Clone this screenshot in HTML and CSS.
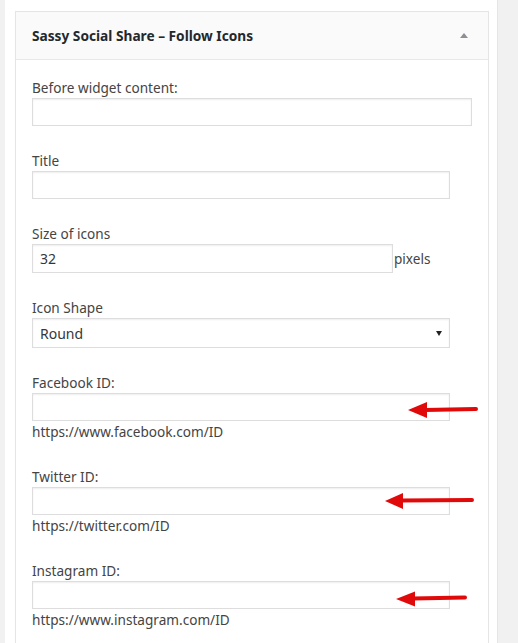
FILE: index.html
```html
<!DOCTYPE html>
<html>
<head>
<meta charset="utf-8">
<link rel="stylesheet" href="styles.css">
</head>
<body>
<div class="page">
  <div class="widget">
    <div class="widget-top">
      <h3 class="widget-title">Sassy Social Share – Follow Icons</h3>
      <span class="toggle"></span>
    </div>
    <div class="widget-inside">
      <div class="field">
        <label class="lbl">Before widget content:</label>
        <input class="txt wide" type="text">
      </div>
      <div class="field">
        <label class="lbl">Title</label>
        <input class="txt" type="text">
      </div>
      <div class="field">
        <label class="lbl">Size of icons</label>
        <div class="size-row">
          <input class="txt size" type="text" value="32">
          <span class="unit">pixels</span>
        </div>
      </div>
      <div class="field">
        <label class="lbl">Icon Shape</label>
        <div class="select-wrap">
          <select class="sel"><option>Round</option></select>
        </div>
      </div>
      <div class="field">
        <label class="lbl">Facebook ID:</label>
        <div class="with-arrow">
          <input class="txt" type="text">
          <svg class="arrow" width="460" height="28" viewBox="0 0 460 28">
            <polygon points="376,17 395,9 395,25" />
            <line x1="393" y1="17" x2="444" y2="16" />
          </svg>
        </div>
        <div class="help">https://www.facebook.com/ID</div>
      </div>
      <div class="field">
        <label class="lbl">Twitter ID:</label>
        <div class="with-arrow">
          <input class="txt" type="text">
          <svg class="arrow" width="460" height="28" viewBox="0 0 460 28">
            <polygon points="353,14 371,6 371,22" />
            <line x1="369" y1="13.5" x2="440" y2="13" />
          </svg>
        </div>
        <div class="help">https://twitter.com/ID</div>
      </div>
      <div class="field">
        <label class="lbl">Instagram ID:</label>
        <div class="with-arrow">
          <input class="txt" type="text">
          <svg class="arrow" width="460" height="28" viewBox="0 0 460 28">
            <polygon points="364,18 383,10.5 383,25.5" />
            <line x1="381" y1="17.5" x2="433" y2="16.5" />
          </svg>
        </div>
        <div class="help">https://www.instagram.com/ID</div>
      </div>
    </div>
  </div>
</div>
</body>
</html>
```
FILE: styles.css
```css
html, body {
  margin: 0;
  padding: 0;
}
body {
  background: #f1f1f1;
  font-family: "Noto Sans", "Open Sans", sans-serif;
  color: #444;
  font-size: 13.6px;
}
.page {
  margin-left: 5px;
  width: 493px;
  min-height: 643px;
  background: #fff;
  border-right: 1px solid #e5e5e5;
  padding-top: 11px;
  box-sizing: border-box;
}
.widget {
  margin-left: 10px;
  width: 474px;
  box-sizing: border-box;
  border: 1px solid #e5e5e5;
  box-shadow: 0 1px 1px rgba(0,0,0,.04);
  background: #fff;
}
.widget-top {
  height: 48px;
  box-sizing: border-box;
  background: #fafafa;
  border-bottom: 1px solid #e8e8e8;
  display: flex;
  align-items: center;
  justify-content: space-between;
  padding: 0 20px 0 16px;
}
.widget-title {
  margin: 0;
  font-size: 13.7px;
  font-weight: 700;
  color: #23282d;
  line-height: 47px;
}
.toggle {
  width: 0;
  height: 0;
  border-left: 4px solid transparent;
  border-right: 4px solid transparent;
  border-bottom: 5px solid #8c8f94;
  margin-top: -1px;
}
.widget-inside {
  padding: 18px 16px 0 16px;
}
.field {
  margin-bottom: 25px;
}
.lbl {
  display: block;
  line-height: 20px;
  height: 20px;
  color: #444;
}
.txt {
  display: block;
  box-sizing: border-box;
  width: 418px;
  height: 28px;
  margin: 0;
  border: 1px solid #ddd;
  box-shadow: inset 0 1px 2px rgba(0,0,0,.07);
  background: #fff;
  padding: 0 7px;
  font-family: "Noto Sans", "Open Sans", sans-serif;
  font-size: 14px;
  color: #32373c;
  outline: none;
}
.txt.wide {
  width: 440px;
}
.size-row {
  display: flex;
  align-items: center;
}
.txt.size {
  width: 361px;
  height: 29px;
}
.unit {
  margin-left: 1px;
  color: #444;
}
.select-wrap {
  position: relative;
  width: 418px;
}
.select-wrap::after {
  content: "";
  position: absolute;
  right: 8px;
  top: 13px;
  border-left: 3px solid transparent;
  border-right: 3px solid transparent;
  border-top: 5px solid #222;
  pointer-events: none;
}
.sel {
  display: block;
  -webkit-appearance: none;
  appearance: none;
  box-sizing: border-box;
  width: 418px;
  height: 30px;
  margin: 0;
  border: 1px solid #ddd;
  border-radius: 0;
  box-shadow: inset 0 1px 2px rgba(0,0,0,.07);
  background: #fff;
  padding: 0 7px;
  font-family: "Noto Sans", "Open Sans", sans-serif;
  font-size: 14px;
  color: #32373c;
}
.with-arrow {
  position: relative;
}
.arrow {
  position: absolute;
  left: 0;
  top: 0;
  overflow: visible;
  pointer-events: none;
}
.arrow polygon {
  fill: #e10a0a;
}
.arrow line {
  stroke: #e10a0a;
  stroke-width: 4;
  stroke-linecap: round;
}
.help {
  line-height: 21px;
  color: #444;
}
```
